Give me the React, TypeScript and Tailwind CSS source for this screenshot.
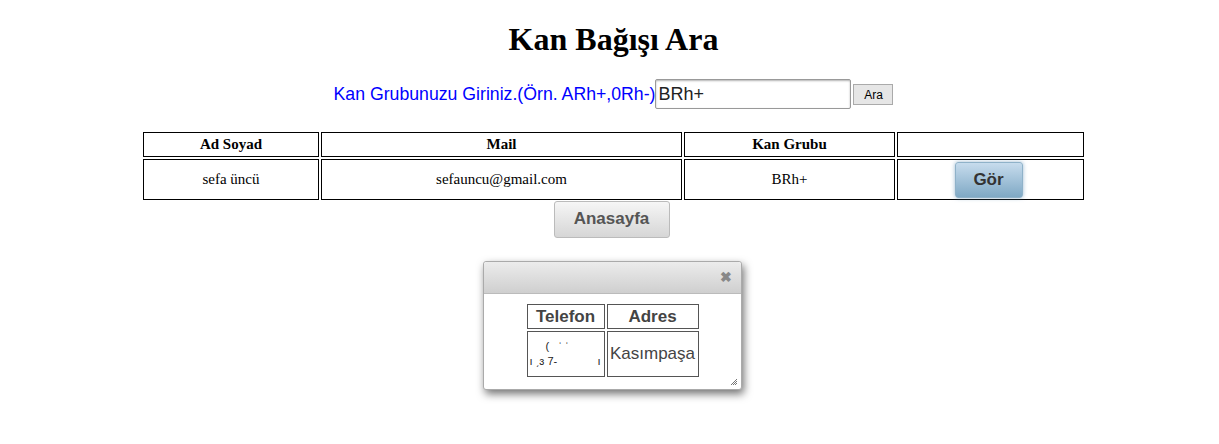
import React from "react";

const serif = { fontFamily: '"Liberation Serif", "Times New Roman", serif' };
const sans = { fontFamily: '"Liberation Sans", Arial, sans-serif' };

function ResultsTable() {
  return (
    <table
      className="w-[945px] border-separate border-spacing-[2px] text-[15px] text-black"
      style={serif}
    >
      <thead>
        <tr className="h-[23px]">
          <th className="w-[176px] border border-black font-bold">Ad Soyad</th>
          <th className="w-[361px] border border-black font-bold">Mail</th>
          <th className="w-[211px] border border-black font-bold">Kan Grubu</th>
          <th className="border border-black"></th>
        </tr>
      </thead>
      <tbody>
        <tr className="h-[41px]">
          <td className="border border-black text-center">sefa üncü</td>
          <td className="border border-black text-center">sefauncu@gmail.com</td>
          <td className="border border-black text-center">BRh+</td>
          <td className="border border-black text-center">
            <button
              className="mr-[4px] mt-[1px] h-[36px] w-[68px] rounded-[3px] border border-[#8fb2c9] bg-gradient-to-b from-[#c7dced] to-[#7fa9c5] text-[17px] font-bold text-[#333] shadow-[0_0_4px_rgba(90,140,180,0.6)]"
              style={sans}
            >
              Gör
            </button>
          </td>
        </tr>
      </tbody>
    </table>
  );
}

function Dialog() {
  return (
    <div className="w-[259px] rounded-[3px] border border-[#aaa] bg-white shadow-[2px_4px_8px_rgba(0,0,0,0.55)]">
      <div className="flex h-[32px] items-center justify-end rounded-t-[3px] border-b border-[#bbb] bg-gradient-to-b from-[#ececec] to-[#cfcfcf] pr-[9px]">
        <span className="text-[14px] font-bold leading-none text-[#888]" style={sans}>
          ✖
        </span>
      </div>
      <div className="relative flex justify-center pb-[10px] pt-[8px]">
        <table
          className="border-separate border-spacing-[2px] text-[17px] text-[#444]"
          style={sans}
        >
          <thead>
            <tr className="h-[25px]">
              <th className="w-[78px] border border-[#555] font-bold leading-none">Telefon</th>
              <th className="w-[92px] border border-[#555] font-bold leading-none">Adres</th>
            </tr>
          </thead>
          <tbody>
            <tr className="h-[46px]">
              <td className="border border-[#555] text-[11px] leading-[15px] text-[#222]">
                <div className="pl-[18px]">( &nbsp; ˈ ˈ</div>
                <div className="flex justify-between pl-[2px] pr-[3px]">
                  <span>ı ˏɜ 7-</span>
                  <span>ı</span>
                </div>
              </td>
              <td className="border border-[#555] text-center">Kasımpaşa</td>
            </tr>
          </tbody>
        </table>
        <svg className="absolute bottom-[3px] right-[3px]" width="8" height="8" viewBox="0 0 8 8">
          <path d="M7 1 L1 7 M7 3 L3 7 M7 5 L5 7" stroke="#777" strokeWidth="1" />
        </svg>
      </div>
    </div>
  );
}

export default function App() {
  return (
    <div className="flex min-h-[444px] w-full flex-col items-center bg-white pl-[8px]">
      <h1 className="mt-[21px] text-[32px] font-bold leading-[36px] text-black" style={serif}>
        Kan Bağışı Ara
      </h1>
      <div className="mt-[22px] flex items-center" style={sans}>
        <span className="text-[17.7px] text-[#0000ff]">Kan Grubunuzu Giriniz.(Örn. ARh+,0Rh-)</span>
        <input
          defaultValue="BRh+"
          className="h-[30px] w-[196px] rounded-[2px] border border-[#999] px-[2px] text-[18px] text-[#222] shadow-[inset_0_1px_2px_rgba(0,0,0,0.3)] outline-none"
          style={sans}
        />
        <button className="ml-[2px] mt-[1px] h-[21px] w-[40px] border border-[#aaa] bg-[#e6e6e6] text-[12px] text-black">
          Ara
        </button>
      </div>
      <div className="mt-[21px]">
        <ResultsTable />
      </div>
      <button
        className="-mt-[1px] mr-[4px] h-[37px] w-[116px] rounded-[3px] border border-[#bbb] bg-gradient-to-b from-[#f6f6f6] to-[#d6d6d6] text-[17px] font-bold text-[#555]"
        style={sans}
      >
        Anasayfa
      </button>
      <div className="mr-[2px] mt-[23px]">
        <Dialog />
      </div>
    </div>
  );
}
